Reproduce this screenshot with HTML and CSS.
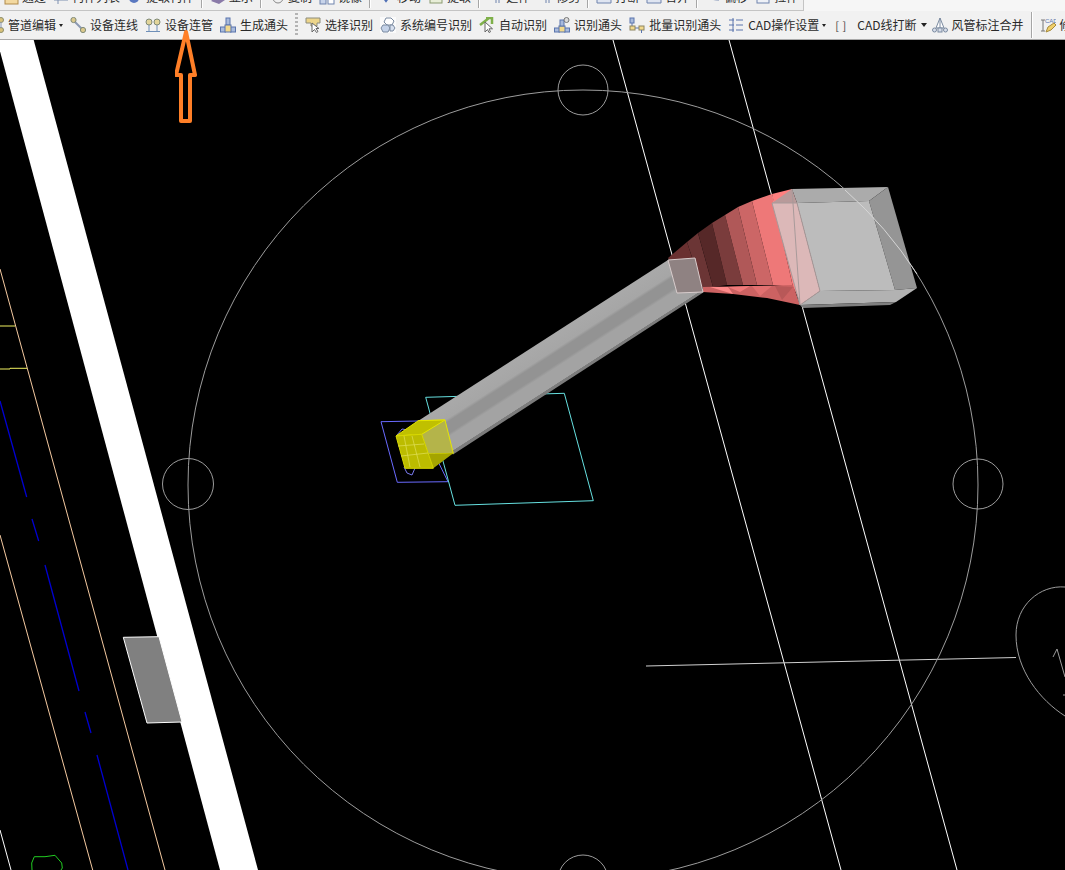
FILE: index.html
```html
<!DOCTYPE html>
<html lang="zh-CN">
<head>
  <meta charset="UTF-8" />
  <title>CAD 管道编辑</title>
  <meta name="viewport" content="width=device-width, initial-scale=1" />
  <link rel="stylesheet" href="styles.css">
</head>
<body>
  <header class="toolbar">
    <div class="row row-top">
      <span class="tool"><svg class="ic" viewBox="0 0 16 16"><rect x="2" y="4" width="13" height="11" fill="#f3d9a0" stroke="#b08a4a"/></svg>通过</span>
      <span class="tool"><svg class="ic" viewBox="0 0 16 16"><path d="M1 6h14M1 11h14M5 1v14" stroke="#7d8fb0" fill="none"/></svg>构件列表</span>
      <span class="tool"><svg class="ic" viewBox="0 0 16 16"><circle cx="7" cy="9" r="5" fill="#5a78c0"/></svg>提取构件</span>
      <i class="sep"></i>
      <span class="tool"><svg class="ic" viewBox="0 0 16 16"><path d="M1 12l6-5 8 4-6 4z" fill="#8a7aa8"/></svg>显示</span>
      <i class="sep"></i>
      <span class="tool"><svg class="ic" viewBox="0 0 16 16"><circle cx="9" cy="9" r="5" fill="none" stroke="#888"/></svg>复制</span>
      <span class="tool"><svg class="ic" viewBox="0 0 16 16"><rect x="1" y="6" width="6" height="9" fill="#c8d4ea" stroke="#6f83ad"/><rect x="9" y="6" width="6" height="9" fill="#fff" stroke="#6f83ad"/></svg>镜像</span>
      <i class="sep"></i>
      <span class="tool"><svg class="ic" viewBox="0 0 16 16"><path d="M8 1v9M5 8l3 4 3-4" stroke="#4f6fb5" stroke-width="2" fill="none"/></svg>移动</span>
      <span class="tool"><svg class="ic" viewBox="0 0 16 16"><rect x="2" y="4" width="12" height="10" fill="#e8eed8" stroke="#8a9a70"/></svg>提取</span>
      <i class="sep"></i>
      <span class="tool"><svg class="ic" viewBox="0 0 16 16"><path d="M9 1v13M12 1v13" stroke="#6f83ad" fill="none"/></svg>延伸</span>
      <span class="tool"><svg class="ic" viewBox="0 0 16 16"><path d="M9 1v13M12 1v13" stroke="#6f83ad" fill="none"/></svg>修剪</span>
      <i class="sep"></i>
      <span class="tool"><svg class="ic" viewBox="0 0 16 16"><path d="M1 9h14v5H1z" fill="#dfe5f1" stroke="#6f83ad"/></svg>打断</span>
      <span class="tool"><svg class="ic" viewBox="0 0 16 16"><path d="M1 9h14v5H1z" fill="#dfe5f1" stroke="#6f83ad"/></svg>合并</span>
      <i class="sep"></i>
      <span class="tool"><svg class="ic" viewBox="0 0 16 16"><path d="M2 3c0 6 4 8 12 8" stroke="#6f83ad" fill="none"/></svg>偏移</span>
      <span class="tool"><svg class="ic" viewBox="0 0 16 16"><rect x="2" y="5" width="12" height="9" fill="#eef1f7" stroke="#6f83ad"/></svg>拉伸</span>
    </div>

    <div class="row row-main">
      <span class="tool tool-first">
        <svg class="ic" viewBox="0 0 16 16"><circle cx="13" cy="3" r="2.5" fill="#d9c27a" stroke="#8d8d6a"/><circle cx="13" cy="13" r="2.5" fill="#d9c27a" stroke="#8d8d6a"/><path d="M13 5v6" stroke="#8d9ab3"/></svg>
        管道编辑<b class="caret"></b>
      </span>
      <span class="tool">
        <svg class="ic" viewBox="0 0 16 16"><path d="M4 4l8 8" stroke="#8d9ab3" stroke-width="2"/><circle cx="3.5" cy="3" r="2.6" fill="#dcc98c" stroke="#7f8a78"/><circle cx="13" cy="13" r="2.6" fill="#dcc98c" stroke="#7f8a78"/></svg>
        设备连线
      </span>
      <span class="tool">
        <svg class="ic" viewBox="0 0 16 16"><path d="M4 8v6M12 8v6M1 14.500h14" stroke="#6f8fb8" fill="none"/><circle cx="4" cy="5" r="3" fill="#e2d59a" stroke="#7f8a78"/><circle cx="12" cy="5" r="3" fill="#e2d59a" stroke="#7f8a78"/></svg>
        设备连管
      </span>
      <span class="tool">
        <svg class="ic" viewBox="0 0 16 16"><rect x="6" y="1" width="4" height="7" fill="#a9bbdc" stroke="#5a75ad"/><rect x="0.500" y="10" width="5" height="5" fill="#a9bbdc" stroke="#5a75ad"/><rect x="10.500" y="10" width="5" height="5" fill="#a9bbdc" stroke="#5a75ad"/><rect x="5" y="8" width="6" height="7" fill="#f2d98c" stroke="#5a75ad"/></svg>
        生成通头
      </span>
      <i class="grip"></i>
      <span class="tool">
        <svg class="ic" viewBox="0 0 16 16"><path d="M1 1h14v5h-3v3H6V6H1z" fill="#edd58a" stroke="#8c8c7c"/><path d="M7 6l0 9 2.500-2.500 2 3 1.500-1-2-3 3 0z" fill="#fff" stroke="#666"/></svg>
        选择识别
      </span>
      <span class="tool">
        <svg class="ic" viewBox="0 0 16 16"><rect width="16" height="16" fill="#fbfbfb"/><path d="M6 1h5l3 3-2 4H7L4 5z" fill="#fff" stroke="#7a8aa0"/><path d="M3 8h5l2 3-2 4H3l-2-4z" fill="#c4d2e8" stroke="#7a8aa0"/><path d="M10 8h3l2 3-2 3h-3z" fill="#d6dfee" stroke="#7a8aa0"/></svg>
        系统编号识别
      </span>
      <span class="tool">
        <svg class="ic" viewBox="0 0 16 16"><path d="M1 8l9-7M7 1h6v6" stroke="#7fb04a" stroke-width="2.500" fill="none"/><path d="M6 5v10l2.500-2.500 1.500 3 1.500-.7-1.500-3h3.500z" fill="#fff" stroke="#666"/></svg>
        自动识别
      </span>
      <span class="tool">
        <svg class="ic" viewBox="0 0 16 16"><rect x="0.500" y="11" width="5" height="4" fill="#a9bbdc" stroke="#5a75ad"/><rect x="10.500" y="11" width="5" height="4" fill="#a9bbdc" stroke="#5a75ad"/><rect x="5" y="9" width="6" height="6" fill="#f2d98c" stroke="#5a75ad"/><rect x="6" y="3" width="4" height="6" fill="#a9bbdc" stroke="#5a75ad"/><circle cx="12.500" cy="3" r="2.500" fill="#ddd" stroke="#777"/></svg>
        识别通头
      </span>
      <span class="tool">
        <svg class="ic" viewBox="0 0 16 16"><path d="M3 5v6h8" stroke="#5a75ad" fill="none"/><rect x="1" y="1" width="4" height="5" fill="#a9bbdc" stroke="#5a75ad"/><rect x="1" y="9" width="5" height="4" fill="#f2d98c" stroke="#8c8460"/><rect x="10" y="9" width="5" height="4" fill="#f2d98c" stroke="#8c8460"/><path d="M12.500 13v3" stroke="#5a75ad"/></svg>
        批量识别通头
      </span>
      <span class="tool">
        <svg class="ic" viewBox="0 0 16 16"><path d="M5 1v14M1 3h5M1 8h5M1 13h5M8 3h7M8 8h7M8 13h7" stroke="#5a75ad" fill="none"/></svg>
        CAD操作设置<b class="caret"></b>
      </span>
      <span class="tool tool-plain">[ ]</span>
      <span class="tool">CAD线打断<b class="caret caret-wide"></b></span>
      <span class="tool">
        <svg class="ic" viewBox="0 0 16 16"><path d="M8 1L4 11h8z" fill="#fff" stroke="#7a8aa0"/><path d="M8 1v10" stroke="#7a8aa0"/><circle cx="2.500" cy="13" r="2" fill="#d8deea" stroke="#7a8aa0"/><circle cx="13.500" cy="13" r="2" fill="#d8deea" stroke="#7a8aa0"/><rect x="6" y="11" width="4" height="4" fill="#d8deea" stroke="#7a8aa0"/></svg>
        风管标注合并
      </span>
      <i class="sep sep-tall"></i>
      <span class="tool">
        <svg class="ic" viewBox="0 0 16 16"><text x="5" y="6" class="ic-label">CAD</text><path d="M1 3h4M3 3v11M1 14h4" stroke="#777" fill="none"/><path d="M6 15l2-5 6-4 2 2-5 5z" fill="#f0cf6a" stroke="#a58a3c"/></svg>
        修改
      </span>
    </div>
  </header>

  <main class="canvas">
    <svg class="drawing" viewBox="0 40 1065 830" width="1065" height="830">
      <defs>
        <linearGradient id="ductShade" gradientUnits="userSpaceOnUse" x1="418" y1="421" x2="443.300" y2="460.300">
          <stop offset="0" stop-color="#a9a9a9"/>
          <stop offset="0.3" stop-color="#a6a6a6"/>
          <stop offset="0.36" stop-color="#939393"/>
          <stop offset="0.58" stop-color="#939393"/>
          <stop offset="0.64" stop-color="#a3a3a3"/>
          <stop offset="0.93" stop-color="#a3a3a3"/>
          <stop offset="0.94" stop-color="#7c7c7c"/>
        </linearGradient>
      </defs>

      <!-- left side: wall band and pipe lines -->
      <polygon points="-3,40 33.700,40 258,870 220,870" fill="#fff"/>
      <polygon points="123.300,637.300 159,636.700 182,722 147,723" fill="#808080" stroke="#fff"/>
      <g fill="none">
        <path d="M0 269L165 870M0 535L92.700 870" stroke="#f4c9a0"/>
        <path d="M0 401L26.700 497M32 519L38.700 541M45 565L79 691M85 712L91 733M97 755L128 870" stroke="#0000d0" stroke-width="1.300"/>
        <path d="M0 326H15M0 369H10V368.300H27" stroke="#f0f060"/>
        <path d="M0 830L11 870" stroke="#fff"/>
        <path d="M32 870L31.700 863L34.300 856.700H45L55 855.300L61.700 863L62.300 868L61 870" stroke="#22cc22"/>
      </g>

      <!-- grid lines and small circles -->
      <g fill="none" stroke="#9c9c9c">
        <path d="M613 40L841 870M729 40L957 870" stroke="#fff"/>
        <path d="M646 666L1016 657.500" stroke="#d0d0d0"/>
        <circle cx="583" cy="485" r="395"/>
        <circle cx="583" cy="90" r="25"/>
        <circle cx="188" cy="484" r="25.500"/>
        <circle cx="978" cy="484" r="25"/>
        <circle cx="583" cy="880" r="25"/>
        <path d="M1065 587C1040 585 1016 605 1016 635C1016 670 1040 700 1065 716"/>
        <path d="M1053 657L1057 649L1065 677M1063 695H1065"/>
      </g>

      <!-- outlines under the duct -->
      <g fill="none">
        <polygon points="381,421.700 418,421 448,481.700 397.300,482.300" stroke="#6a6aff"/>
        <path d="M397 435L402 429L408 430M415 468L412 475L407 473L404 467" stroke="#7a7af0"/>
        <polygon points="425.700,397.300 564.300,393.300 593.300,500.700 455,505.300" stroke="#66e0e0"/>
      </g>

      <!-- straight duct -->
      <polygon points="418,421 668,260 704,292 453,454.500" fill="url(#ductShade)"/>

      <!-- reducer slices -->
      <polygon points="668,258 687,242 702,288 690,292" fill="#6a3030"/>
      <polygon points="687,242 698,233 713,287 702,288" fill="#6b3535"/>
      <polygon points="698,233 712,223 727,285 713,287" fill="#562828"/>
      <polygon points="712,223 725,215 743,285 727,285" fill="#7a3c3c"/>
      <polygon points="725,215 738,207 757,285 743,285" fill="#b05858"/>
      <polygon points="738,207 752,201 773,285 757,285" fill="#cc6666"/>
      <polygon points="752,201 772,194 793,287 773,285" fill="#ee7878"/>
      <polygon points="772,194 792,189 802,305 793,287" fill="#ff8080"/>
      <polygon points="703,287 793,285 800,305 767,298 733,294 703,292" fill="#cc6262"/>
      <polygon points="710,287 728,287 733,294" fill="#ff8a8a"/>
      <polygon points="728,287 740,292 750,286" fill="#f07a7a"/>
      <polygon points="752,286 760,296 772,286" fill="#e27070"/>
      <polygon points="775,286 782,300 793,287" fill="#b85858"/>

      <!-- end cap at the thin end -->
      <polygon points="668,260 695,258 703,292 677,293" fill="#8f8282" stroke="#d8cccc"/>

      <!-- big box -->
      <polygon points="792,189 888,187 869,201 797,203" fill="#ababab"/>
      <polygon points="888,187 917,288 895,290 869,201" fill="#959595"/>
      <polygon points="820,291 895,290 917,288 896,302 800,305" fill="#b2b2b2"/>
      <polygon points="800,305 896,302 890,305 803,308" fill="#7f7f7f"/>
      <polygon points="797,203 869,201 895,290 820,291" fill="#bcbcbc"/>
      <polygon points="792,189 797,203 772,203" fill="#b89a9a"/>
      <polygon points="772,203 797,203 820,291 800,305" fill="#dcb8b8" stroke="#a89a9a"/>
      <path d="M792 189L800 305" stroke="#a89a9a" fill="none"/>
      <path d="M845 190A395 395 0 0 1 917 274" stroke="#d6d6d6" fill="none"/>

      <!-- yellow end of the duct -->
      <polygon points="418.300,420.700 445,420 453.300,453.300 426,454" fill="#b4b44a" stroke="#e6e600"/>
      <polygon points="396,436 418.300,420.700 445,420 421.700,434.300" fill="#c0c000" stroke="#e6e600"/>
      <polygon points="421.700,434.300 426,454 453.300,453.300 433.300,468.300" fill="#a4a400"/>
      <polygon points="396,436 421.700,434.300 433.300,468.300 405,468.300" fill="#bcbc00" stroke="#d8d800"/>
      <path d="M404 436L410 467M412 436L420 467M398 446L424 444M401 456L428 453" stroke="#e0e05a" fill="none" stroke-width="0.700"/>
    </svg>

    <svg class="arrow" viewBox="0 0 24 96" width="24" height="96">
      <path d="M11 3L20 46H15V92H6V46H1Z" fill="none" stroke="#ff7f27" stroke-width="4" stroke-linejoin="round"/>
    </svg>
  </main>
</body>
</html>
```

FILE: styles.css
```css
html, body {
  margin: 0;
  height: 870px;
  overflow: hidden;
  background: #000;
}
body {
  position: relative;
  font-family: "Noto Sans CJK SC", "Liberation Sans", sans-serif;
  font-size: 12px;
  color: #2a2a2a;
}

/* toolbars */
.toolbar {
  height: 40px;
  box-sizing: border-box;
  display: flex;
  flex-direction: column;
  justify-content: flex-end;
  overflow: hidden;
  background: #f6f6f6;
  border-bottom: 1px solid #a9a9a9;
}
.row {
  display: flex;
  align-items: center;
  flex-shrink: 0;
  gap: 7px;
  white-space: nowrap;
}
.row > * {
  flex-shrink: 0;
}
.row-top {
  align-self: flex-start;
  height: 26px;
  padding: 0 5px 0 3px;
  background: #f0f0f0;
  border-right: 1px solid #c4c4c4;
  border-bottom: 1px solid #c4c4c4;
}
.row-top .tool {
  gap: 3px;
}
.row-main {
  height: 28px;
  background: #f1f1f1;
}
.tool {
  display: flex;
  align-items: center;
  gap: 4px;
  line-height: 16px;
}
.tool-first {
  margin-left: -12px;
}
.tool-plain {
  width: 13px;
  margin-left: 2px;
  margin-right: 2px;
  font-size: 11px;
  color: #444;
  word-spacing: 1px;
}
.ic {
  width: 16px;
  height: 16px;
  flex-shrink: 0;
}
.ic-label {
  font-family: "Liberation Sans", sans-serif;
  font-size: 6px;
  fill: #5a75ad;
}
.caret {
  width: 0;
  height: 0;
  margin-left: -1px;
  border-left: 2.5px solid transparent;
  border-right: 2.5px solid transparent;
  border-top: 3px solid #222;
}
.caret-wide {
  margin-left: 0;
  margin-right: -2px;
  border-left-width: 3.5px;
  border-right-width: 3.5px;
  border-top-width: 4px;
}
.sep {
  width: 1px;
  height: 22px;
  border-right: 1px solid #fff;
  background: #a6a6a6;
}
.sep-tall {
  height: 26px;
}
.grip {
  width: 3px;
  height: 24px;
  background: repeating-linear-gradient(to bottom, #b4b4b4 0 2px, transparent 2px 4px);
}

/* drawing area */
.canvas {
  background: #000;
}
.drawing {
  display: block;
}
.arrow {
  position: absolute;
  left: 175px;
  top: 29px;
}
```
